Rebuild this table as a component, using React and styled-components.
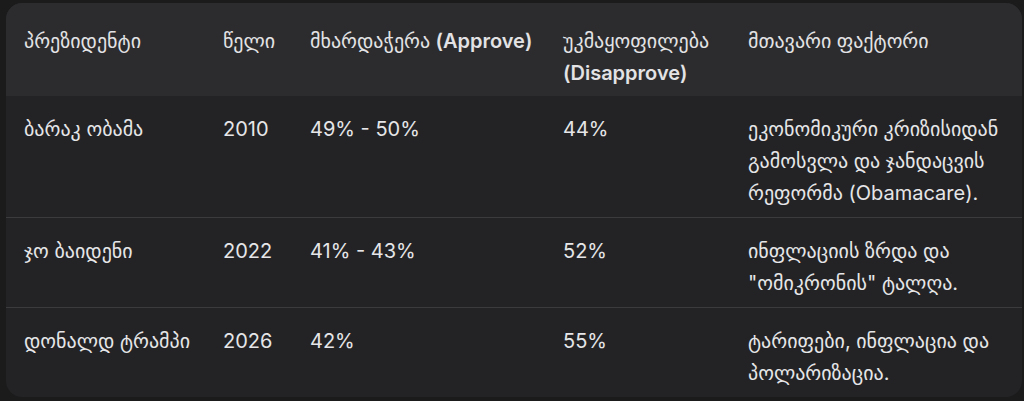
import React from "react";
import styled, { createGlobalStyle } from "styled-components";

const GlobalStyle = createGlobalStyle`
  html, body {
    margin: 0;
    padding: 0;
    background: #1b1b1c;
  }
  body {
    font-family: "Inter", "DejaVu Sans", sans-serif;
    -webkit-font-smoothing: antialiased;
  }
`;

const Page = styled.div`
  padding: 3px 2px 4px 6px;
`;

const Card = styled.div`
  border-radius: 16px;
  overflow: hidden;
  background: #232325;
`;

const Table = styled.table`
  width: 100%;
  border-collapse: collapse;
  table-layout: fixed;
  color: #e6e6e8;
  font-size: 20px;
  line-height: 32px;
`;

const Head = styled.thead`
  background: #2c2c2e;
`;

const HeadCell = styled.th`
  text-align: left;
  vertical-align: top;
  font-weight: 500;
  padding: 22px 4px 7px 18px;
  color: #e3e3e5;
`;

const Row = styled.tr`
  & + & {
    border-top: 1px solid #3b3b3d;
  }
`;

const Cell = styled.td`
  vertical-align: top;
  padding: 17px 4px 8px 18px;
`;

const Latin = styled.span`
  font-weight: ${(p) => (p.$bold ? 600 : 400)};
`;

const columns = [
  { key: "president", width: 199, label: "პრეზიდენტი" },
  { key: "year", width: 87, label: "წელი" },
  {
    key: "approve",
    width: 253,
    label: (
      <>
        მხარდაჭერა <Latin $bold>(Approve)</Latin>
      </>
    ),
  },
  {
    key: "disapprove",
    width: 185,
    label: (
      <>
        უკმაყოფილება <Latin $bold>(Disapprove)</Latin>
      </>
    ),
  },
  { key: "factor", width: 292, label: "მთავარი ფაქტორი" },
];

const rows = [
  {
    president: "ბარაკ ობამა",
    year: "2010",
    approve: "49% - 50%",
    disapprove: "44%",
    factor: "ეკონომიკური კრიზისიდან გამოსვლა და ჯანდაცვის რეფორმა (Obamacare).",
  },
  {
    president: "ჯო ბაიდენი",
    year: "2022",
    approve: "41% - 43%",
    disapprove: "52%",
    factor: 'ინფლაციის ზრდა და "ომიკრონის" ტალღა.',
  },
  {
    president: "დონალდ ტრამპი",
    year: "2026",
    approve: "42%",
    disapprove: "55%",
    factor: "ტარიფები, ინფლაცია და პოლარიზაცია.",
  },
];

export default function App() {
  return (
    <>
      <GlobalStyle />
      <Page>
        <Card>
          <Table>
            <colgroup>
              {columns.map((c) => (
                <col key={c.key} style={{ width: c.width }} />
              ))}
            </colgroup>
            <Head>
              <tr>
                {columns.map((c) => (
                  <HeadCell key={c.key}>{c.label}</HeadCell>
                ))}
              </tr>
            </Head>
            <tbody>
              {rows.map((r) => (
                <Row key={r.year}>
                  {columns.map((c) => (
                    <Cell key={c.key}>{r[c.key]}</Cell>
                  ))}
                </Row>
              ))}
            </tbody>
          </Table>
        </Card>
      </Page>
    </>
  );
}
